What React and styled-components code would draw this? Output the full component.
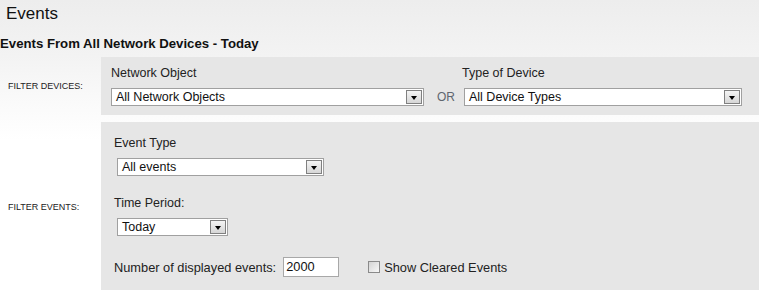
import React from 'react'
import styled, { createGlobalStyle } from 'styled-components'

const GlobalStyle = createGlobalStyle`
  html, body {
    margin: 0;
    padding: 0;
  }
  body {
    width: 759px;
    height: 290px;
    overflow: hidden;
    font-family: Arial, 'Liberation Sans', sans-serif;
    color: #222;
    background: linear-gradient(#ededed 0, #f3f3f3 56px, #fbfbfb 110px, #ffffff 140px);
  }
`

const Page = styled('div')`
  display: flex;
  flex-direction: column;
`

const Title = styled('h1')`
  margin: 0;
  height: 34px;
  padding-left: 6px;
  font-size: 17px;
  font-weight: normal;
  line-height: 28px;
  color: #111;
`

const SubTitle = styled('h2')`
  margin: 0 0 3px;
  font-size: 13.2px;
  font-weight: bold;
  line-height: 20px;
  color: #111;
`

const FilterRow = styled('div')`
  display: flex;
  align-items: stretch;
  margin-bottom: ${({ gap }) => gap || 0}px;
`

const SideLabel = styled('div')`
  width: 101px;
  flex: none;
  display: flex;
  align-items: center;
  padding-left: 8px;
  box-sizing: border-box;
  font-size: 9px;
  text-transform: uppercase;
  color: #222;
`

const Panel = styled('div')`
  flex: 1;
  background: #e6e6e6;
  padding: ${({ pad }) => pad};
  display: flex;
  flex-direction: ${({ column }) => (column ? 'column' : 'row')};
  align-items: ${({ column }) => (column ? 'flex-start' : 'flex-end')};
`

const Field = styled('div')`
  display: flex;
  flex-direction: column;
  margin-top: ${({ top }) => top || 0}px;
`

const FieldLabel = styled('label')`
  font-size: 12.5px;
  line-height: 16px;
  margin-bottom: 7px;
  margin-left: ${({ indent }) => indent || 0}px;
  color: #222;
`

const Or = styled('span')`
  font-size: 12px;
  line-height: 18px;
  color: #5f6770;
  margin: 0 9px 0 13px;
`

const SelectBox = styled('div')`
  display: flex;
  align-items: stretch;
  box-sizing: border-box;
  width: ${({ width }) => width}px;
  height: 18px;
  margin-left: ${({ indent }) => indent || 0}px;
  background: #fff;
  border: 1px solid #a0a0a0;
`

const SelectValue = styled('span')`
  flex: 1;
  padding-left: 4px;
  font-size: 12.5px;
  line-height: 16px;
  color: #111;
  white-space: nowrap;
  overflow: hidden;
`

const DropButton = styled('span')`
  width: 16px;
  margin: 1px;
  box-sizing: border-box;
  border: 1px solid #808080;
  background: linear-gradient(#f4f4f4, #d6d6d6);
  display: flex;
  align-items: center;
  justify-content: center;
`

const Arrow = styled('span')`
  width: 0;
  height: 0;
  margin-top: 2px;
  border-left: 3.5px solid transparent;
  border-right: 3.5px solid transparent;
  border-top: 4px solid #000;
`

const CountRow = styled('div')`
  display: flex;
  align-items: center;
  margin-top: 21px;
  font-size: 12.8px;
`

const CountInput = styled('div')`
  width: 56px;
  height: 20px;
  box-sizing: border-box;
  margin-left: 7px;
  padding-left: 2px;
  background: #fff;
  border: 1px solid #a8a8a8;
  font-size: 12.8px;
  line-height: 18px;
  color: #111;
`

const CheckLabel = styled('label')`
  display: flex;
  align-items: center;
  margin-left: 29px;
  color: #222;
`

const CheckBox = styled('span')`
  width: 12px;
  height: 12px;
  box-sizing: border-box;
  margin-right: 4px;
  border: 1px solid #8a8a8a;
  background: linear-gradient(135deg, #d4d4d4, #f8f8f8);
`

const Select = ({ value, width, indent }) => (
  <SelectBox width={width} indent={indent}>
    <SelectValue>{value}</SelectValue>
    <DropButton>
      <Arrow />
    </DropButton>
  </SelectBox>
)

const App = () => (
  <Page>
    <GlobalStyle />
    <Title>Events</Title>
    <SubTitle>Events From All Network Devices - Today</SubTitle>

    <FilterRow gap={7}>
      <SideLabel>Filter Devices:</SideLabel>
      <Panel pad="8px 0 9px 10px">
        <Field>
          <FieldLabel>Network Object</FieldLabel>
          <Select value="All Network Objects" width={313} />
        </Field>
        <Or>OR</Or>
        <Field>
          <FieldLabel indent={-2}>Type of Device</FieldLabel>
          <Select value="All Device Types" width={278} />
        </Field>
      </Panel>
    </FilterRow>

    <FilterRow>
      <SideLabel>Filter Events:</SideLabel>
      <Panel column pad="13px 0 14px 13px">
        <Field>
          <FieldLabel>Event Type</FieldLabel>
          <Select value="All events" width={207} indent={3} />
        </Field>
        <Field top={19}>
          <FieldLabel>Time Period:</FieldLabel>
          <Select value="Today" width={111} indent={3} />
        </Field>
        <CountRow>
          <span>Number of displayed events:</span>
          <CountInput>2000</CountInput>
          <CheckLabel>
            <CheckBox />
            Show Cleared Events
          </CheckLabel>
        </CountRow>
      </Panel>
    </FilterRow>
  </Page>
)

export default App
